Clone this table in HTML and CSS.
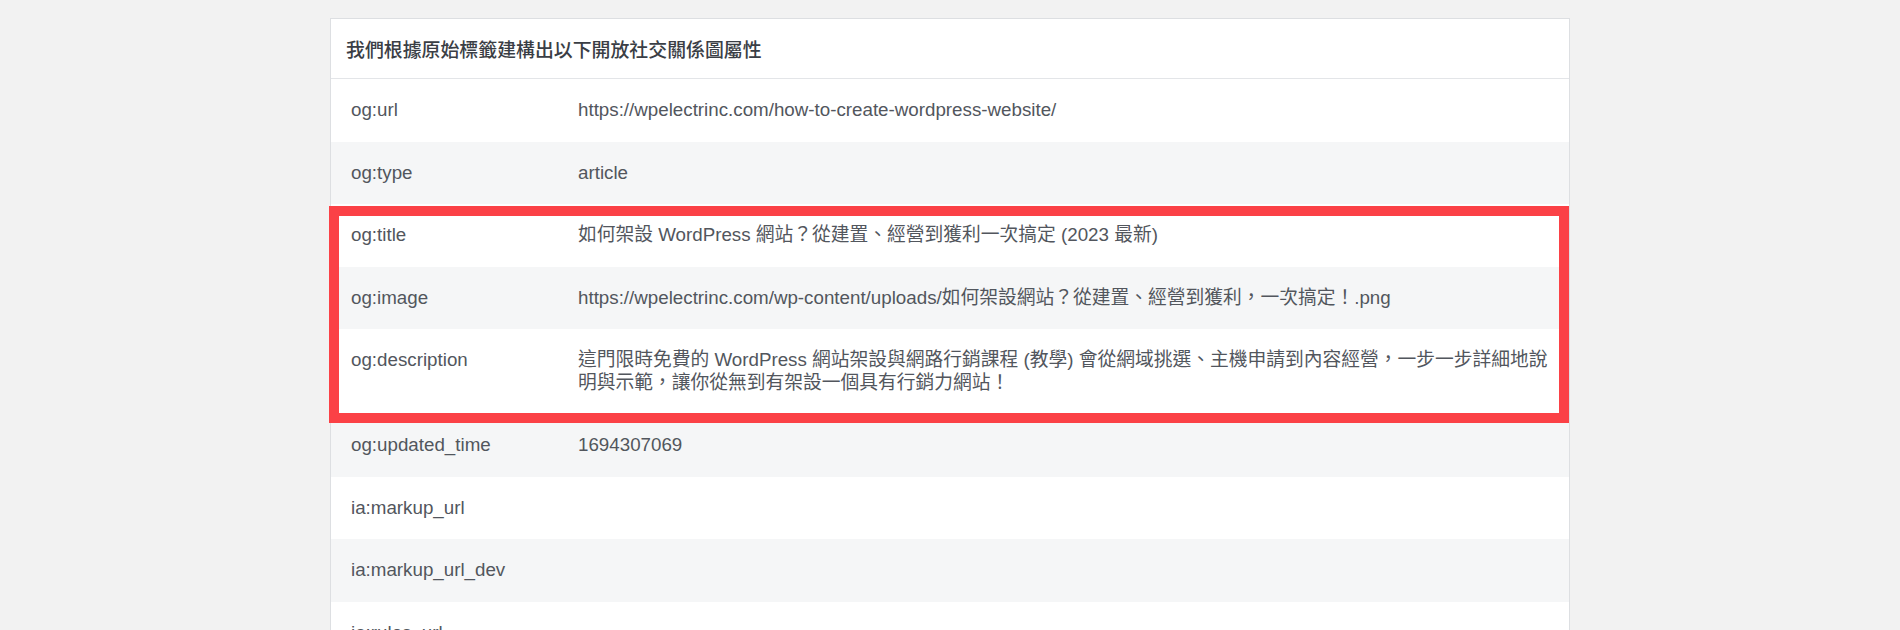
FILE: index.html
```html
<!DOCTYPE html>
<html lang="zh-Hant">
<head>
<meta charset="utf-8">
<title>開放社交關係圖屬性</title>
<link rel="stylesheet" href="styles.css">
</head>
<body>
<section class="card">
  <div class="card-header">我們根據原始標籤建構出以下開放社交關係圖屬性</div>
  <div class="row"><div class="key">og:url</div><div class="val">https://wpelectrinc.com/how-to-create-wordpress-website/</div></div>
  <div class="row alt"><div class="key">og:type</div><div class="val">article</div></div>
  <div class="highlight-group">
    <div class="row"><div class="key">og:title</div><div class="val">如何架設 WordPress 網站？從建置、經營到獲利一次搞定 (2023 最新)</div></div>
    <div class="row alt"><div class="key">og:image</div><div class="val">https://wpelectrinc.com/wp-content/uploads/如何架設網站？從建置、經營到獲利，一次搞定！.png</div></div>
    <div class="row"><div class="key">og:description</div><div class="val">這門限時免費的 WordPress 網站架設與網路行銷課程 (教學) 會從網域挑選、主機申請到內容經營，一步一步詳細地說明與示範，讓你從無到有架設一個具有行銷力網站！</div></div>
    <div class="highlight-box"></div>
  </div>
  <div class="row alt"><div class="key">og:updated_time</div><div class="val">1694307069</div></div>
  <div class="row"><div class="key">ia:markup_url</div><div class="val"></div></div>
  <div class="row alt"><div class="key">ia:markup_url_dev</div><div class="val"></div></div>
  <div class="row"><div class="key">ia:rules_url</div><div class="val"></div></div>
  <div class="row alt"><div class="key">ia:rules_url_dev</div><div class="val"></div></div>
</section>
</body>
</html>
```

FILE: styles.css
```css
html, body {
  margin: 0;
  padding: 0;
  background: #f2f2f2;
}

body {
  font-family: "Liberation Sans", Arial, "Noto Sans CJK TC", sans-serif;
  color: #52565d;
  padding-top: 18px;
}

.card {
  width: 1240px;
  margin: 0 auto;
  background: #ffffff;
  border: 1px solid #dddfe2;
  box-sizing: border-box;
}

.card-header {
  font-family: "Noto Sans CJK TC", sans-serif;
  font-size: 18.9px;
  font-weight: 500;
  color: #3a3e45;
  line-height: 23px;
  padding: 18px 15px;
  border-bottom: 1px solid #e3e5e8;
}

.row {
  display: grid;
  grid-template-columns: 227px 1fr;
  padding: 20px;
  font-size: 18.75px;
  line-height: 22.5px;
  background: #ffffff;
}

.row.alt {
  background: #f5f6f7;
}

.key,
.val {
  min-height: 22.5px;
}

.val {
  word-break: break-all;
}

.highlight-group {
  position: relative;
}

.highlight-box {
  position: absolute;
  left: -2px;
  right: 0;
  top: 2px;
  bottom: -9px;
  border: 10px solid #fb4146;
  pointer-events: none;
}
```
